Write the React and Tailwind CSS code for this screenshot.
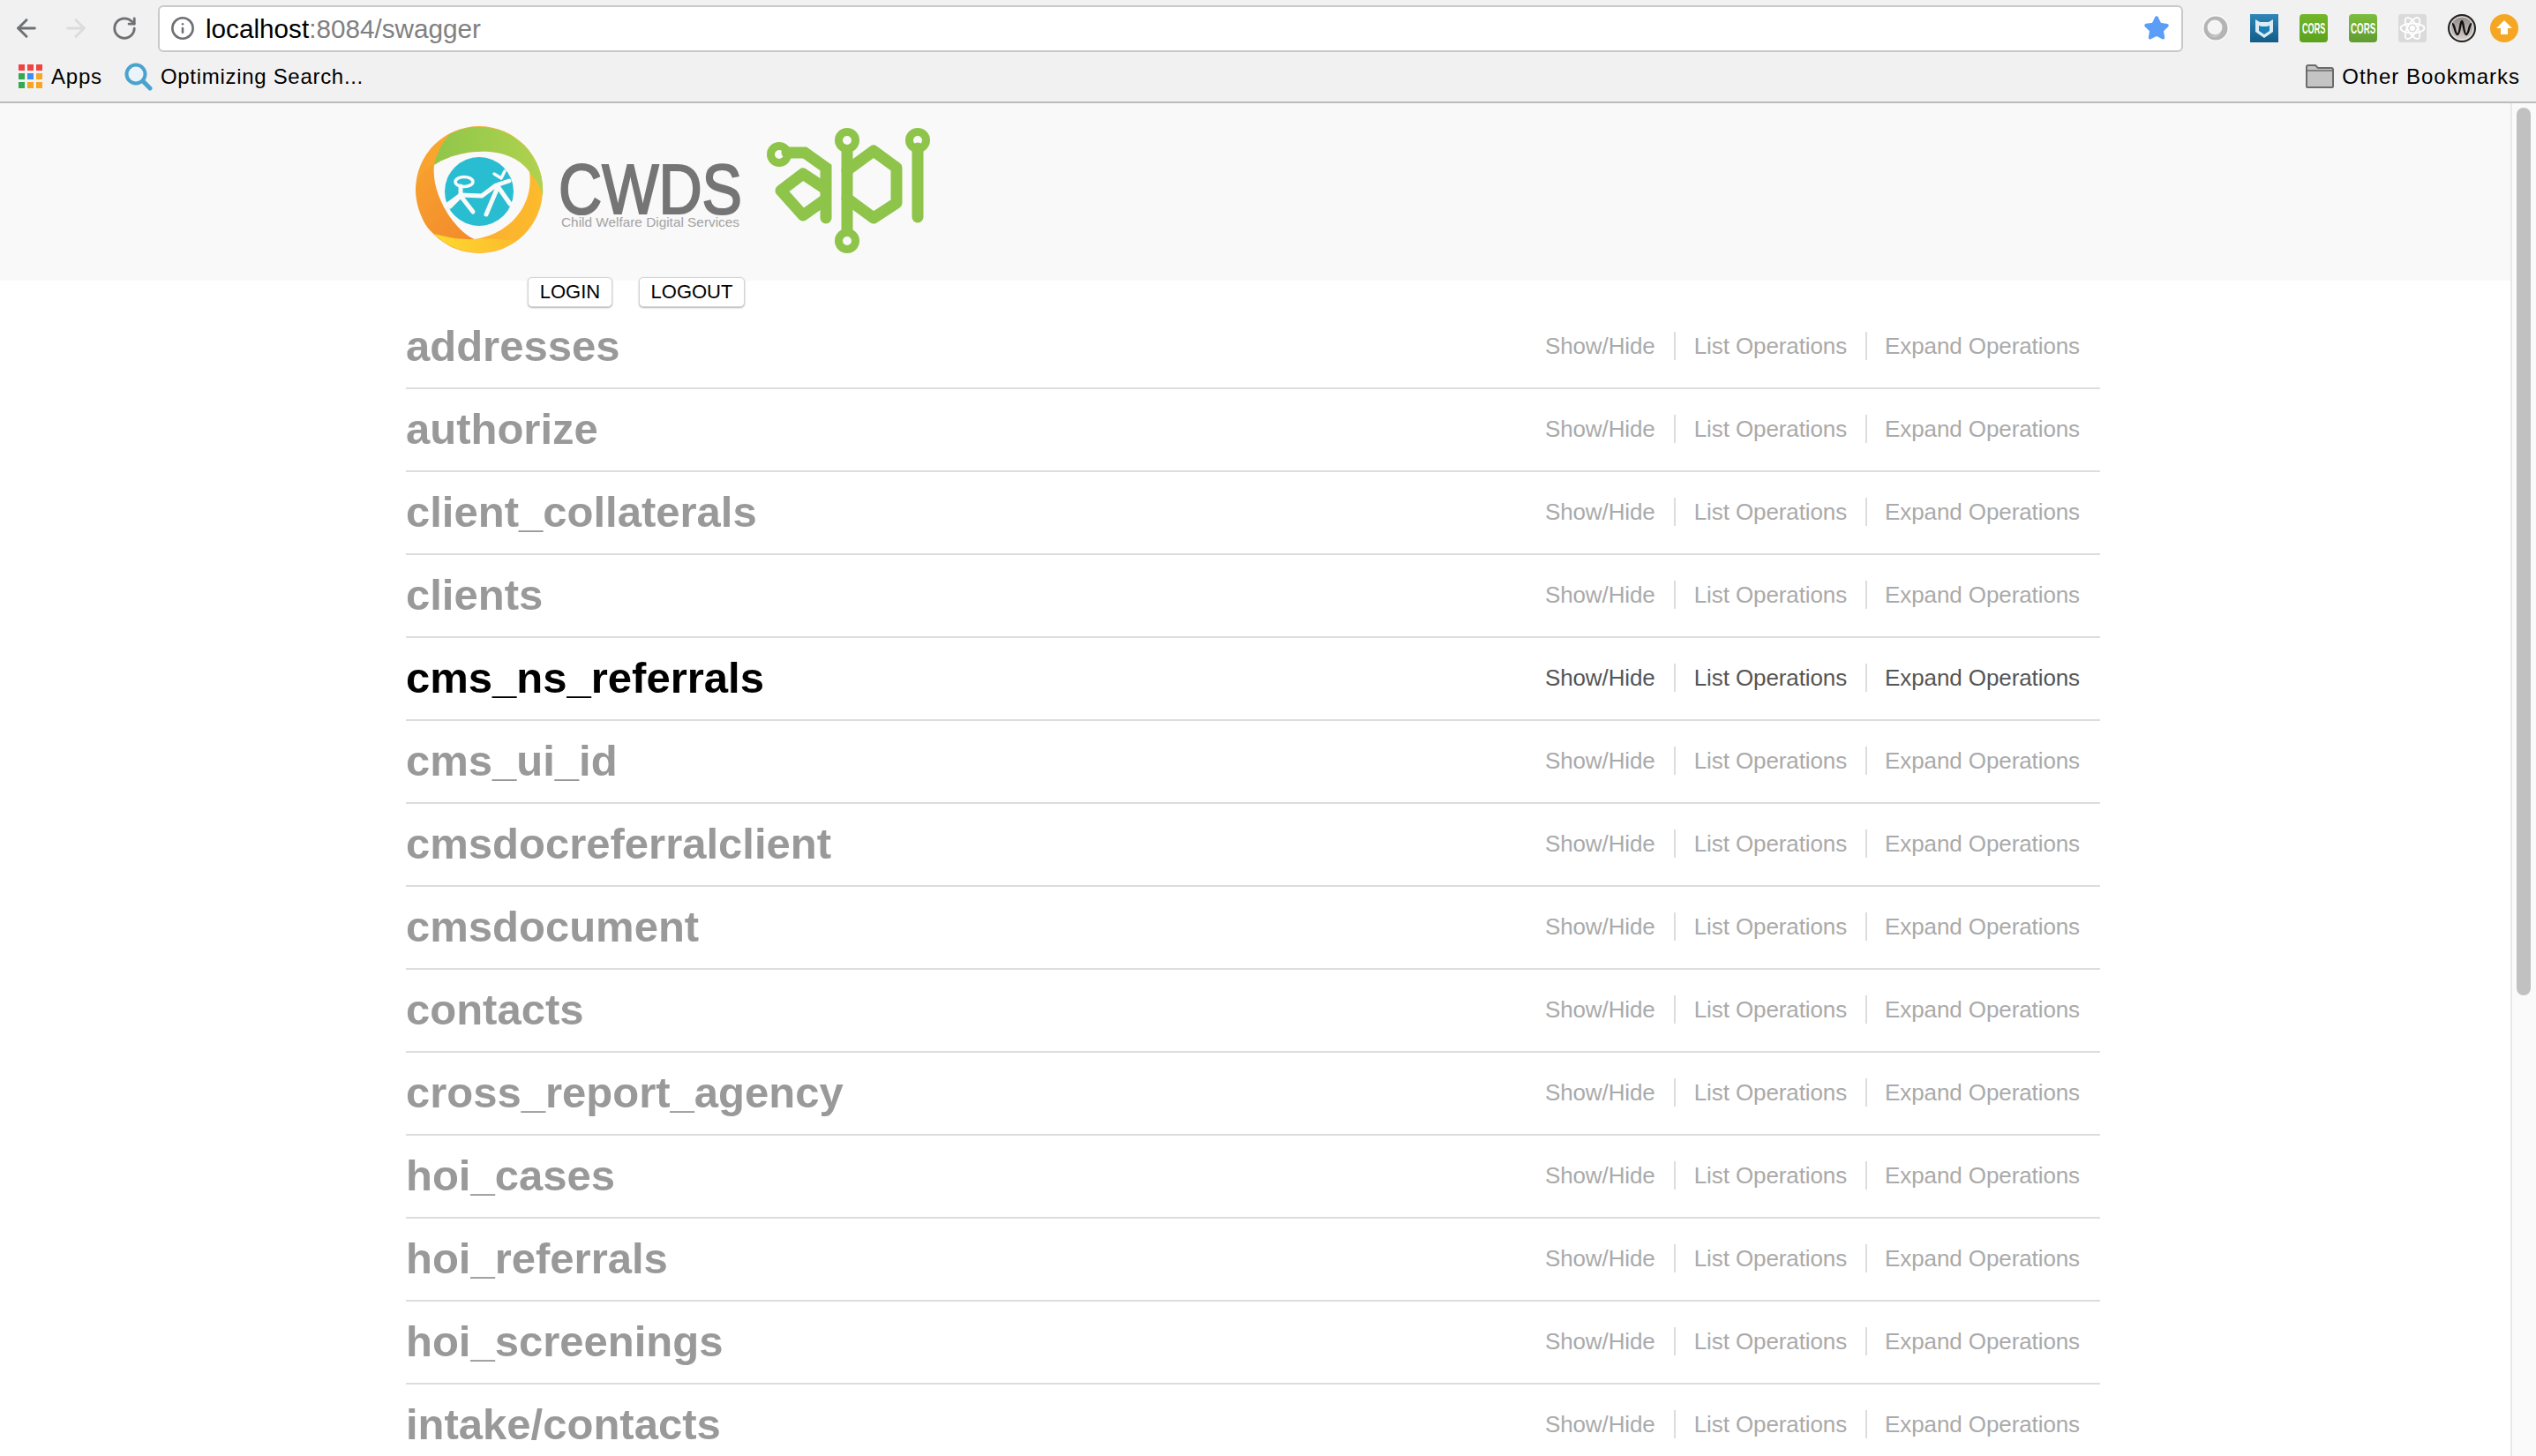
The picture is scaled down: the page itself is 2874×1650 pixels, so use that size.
import React from "react";
import { ArrowLeft, ArrowRight, RotateCw, Info, Star } from "lucide-react";

const resources = [
  "addresses",
  "authorize",
  "client_collaterals",
  "clients",
  "cms_ns_referrals",
  "cms_ui_id",
  "cmsdocreferralclient",
  "cmsdocument",
  "contacts",
  "cross_report_agency",
  "hoi_cases",
  "hoi_referrals",
  "hoi_screenings",
  "intake/contacts",
];

const appColors = [
  "bg-[#ef4444]",
  "bg-[#ef4444]",
  "bg-[#ef4444]",
  "bg-[#34a853]",
  "bg-[#3b8ef5]",
  "bg-[#f5a623]",
  "bg-[#34a853]",
  "bg-[#f5a623]",
  "bg-[#f5a623]",
];

const CorsIcon = ({ id, from, to, squeeze, x }) => (
  <svg width="32" height="32" viewBox="0 0 32 32">
    <defs>
      <linearGradient id={id} x1="0" y1="0" x2="0" y2="1">
        <stop offset="0" stopColor={from} />
        <stop offset="1" stopColor={to} />
      </linearGradient>
    </defs>
    <rect width="32" height="32" rx="4" fill={`url(#${id})`} />
    {/* tall condensed lettering */}
    <text
      transform={`translate(${x} 22) scale(${squeeze} 1)`}
      fill="#fff"
      fontSize="16"
      fontWeight="700"
      fontFamily="Liberation Sans, sans-serif"
    >
      CORS
    </text>
  </svg>
);

const ExtensionIcons = () => (
  <div className="flex items-center">
    <svg width="32" height="32" viewBox="0 0 32 32" className="mr-[23px]">
      <circle cx="16" cy="16" r="15" fill="#fafafa" />
      <circle cx="16" cy="16" r="13.5" fill="#b4b4b4" />
      <circle cx="15" cy="15" r="8.5" fill="#f4f4f4" />
      <path d="M8 23a10 10 0 0 0 14-3 8 8 0 0 1-14 3z" fill="#cfcfcf" />
    </svg>
    <svg width="32" height="32" viewBox="0 0 32 32" className="mr-6">
      <defs>
        <linearGradient id="shieldBg" x1="0" y1="0" x2="0" y2="1">
          <stop offset="0" stopColor="#2f86b8" />
          <stop offset="1" stopColor="#125c88" />
        </linearGradient>
      </defs>
      <rect width="32" height="32" fill="url(#shieldBg)" />
      <path d="M6 6l5 3h10l5-3v14l-10 7-10-7z" fill="#dcecf4" />
      <path d="M10 13l3 1h6l3-1v6l-6 4-6-4z" fill="#1a80b8" />
    </svg>
    <div className="mr-6">
      <CorsIcon id="corsA" from="#72b62a" to="#5ba21c" squeeze={0.57} x={3} />
    </div>
    <div className="mr-6">
      <CorsIcon id="corsB" from="#7cbd3e" to="#609c30" squeeze={0.61} x={2} />
    </div>
    <svg width="32" height="32" viewBox="0 0 32 32" className="mr-6">
      <rect width="32" height="32" rx="3" fill="#dadada" />
      <g fill="none" stroke="#fff" strokeWidth="1.8">
        <ellipse cx="16" cy="16" rx="13.5" ry="5.5" />
        <ellipse cx="16" cy="16" rx="13.5" ry="5.5" transform="rotate(60 16 16)" />
        <ellipse cx="16" cy="16" rx="13.5" ry="5.5" transform="rotate(120 16 16)" />
      </g>
      <circle cx="16" cy="16" r="3" fill="#fff" />
    </svg>
    <svg width="32" height="32" viewBox="0 0 32 32" className="mr-4">
      <defs>
        <linearGradient id="waveBg" x1="0" y1="0" x2="0" y2="1">
          <stop offset="0" stopColor="#8e8683" />
          <stop offset="1" stopColor="#d8d2ce" />
        </linearGradient>
      </defs>
      <circle cx="16" cy="16" r="15" fill="url(#waveBg)" stroke="#222" strokeWidth="2" />
      <circle cx="16" cy="16" r="13" fill="none" stroke="#eee" strokeWidth="1" />
      <path
        d="M5 11c3 0 3 12 6 12s3-15 5-15 2 15 5 15 3-12 6-12"
        fill="none"
        stroke="#111"
        strokeWidth="2.4"
      />
    </svg>
    <svg width="32" height="32" viewBox="0 0 32 32">
      <circle cx="16" cy="16" r="16" fill="#f5a623" />
      <path d="M16 7l9 9h-5v7h-8v-7H7z" fill="#fff" />
    </svg>
  </div>
);

const Logo = () => (
  <svg width="600" height="160" viewBox="0 0 600 160">
    <defs>
      <linearGradient id="ringBase" x1="0" y1="0" x2="1" y2="0">
        <stop offset="0" stopColor="#f8a12f" />
        <stop offset="1" stopColor="#fdbb2d" />
      </linearGradient>
      <linearGradient id="ringGreen" x1="0" y1="0" x2="1" y2="0">
        <stop offset="0" stopColor="#8fc64a" />
        <stop offset="1" stopColor="#b0d24f" />
      </linearGradient>
      <linearGradient id="ringDark" x1="0" y1="0" x2="1" y2="1">
        <stop offset="0" stopColor="#f8a12f" />
        <stop offset="1" stopColor="#f28a2c" />
      </linearGradient>
      <linearGradient id="ringYellow" x1="0" y1="0" x2="1" y2="0">
        <stop offset="0" stopColor="#fdd92e" />
        <stop offset="1" stopColor="#fdbb2d" />
      </linearGradient>
    </defs>

    <circle cx="83" cy="80" r="72" fill="url(#ringBase)" />
    <path d="M11 80C14 104 20 122 32 130 48 134 62 136 78 136 60 130 28 90 32 52 20 58 12 66 11 80z" fill="url(#ringDark)" />
    <path d="M32 130A72 72 0 0 0 125 138C110 136 95 135 78 136 62 137 45 134 32 130z" fill="url(#ringYellow)" />
    <path
      d="M50 17A72 72 0 0 1 155 87C152 75 148 70 140 60 115 25 55 36 32 52 35 38 42 25 50 17z"
      fill="url(#ringGreen)"
    />
    <path d="M32 52C55 36 115 25 140 60 145 95 120 130 78 136 60 130 28 90 32 52z" fill="#f9f9f9" />
    <circle cx="83" cy="82" r="39" fill="#29bdd2" />
    <g fill="none" stroke="#f9f9f9" strokeWidth="5" strokeLinecap="round" strokeLinejoin="round">
      <ellipse cx="66" cy="71" rx="10" ry="5.5" strokeWidth="3.5" />
      <path d="M47 97L62 86 86 87 102 75 117 70" />
      <path d="M62 76V87L76 105" />
      <path d="M62 87L50 99" />
      <path d="M105 75L91 108" />
      <path d="M104 76L118 96" />
      <path d="M100 62L108 67 112 59" strokeWidth="3.5" />
    </g>

    <text
      x="173"
      y="107"
      fill="#757575"
      stroke="#757575"
      strokeWidth="2.2"
      fontSize="80"
      fontFamily="Liberation Sans, sans-serif"
      textLength="208"
      lengthAdjust="spacingAndGlyphs"
    >
      CWDS
    </text>
    <text
      x="176"
      y="122"
      fill="#a3a3a3"
      fontSize="15"
      fontFamily="Liberation Sans, sans-serif"
      textLength="202"
      lengthAdjust="spacingAndGlyphs"
    >
      Child Welfare Digital Services
    </text>

    {/* api mark */}
    <g
      transform="translate(400 0)"
      fill="none"
      stroke="#8dc449"
      strokeWidth="13"
      strokeLinejoin="round"
      strokeLinecap="round"
    >
      <circle cx="23" cy="40" r="9.5" strokeWidth="9" />
      <path d="M32 38H52L76 55V112" strokeLinejoin="miter" />
      <path d="M74 78L50 62 25 81 50 109 74 92" />
      <circle cx="100" cy="24" r="9.5" strokeWidth="9" />
      <circle cx="100" cy="138" r="9.5" strokeWidth="9" />
      <path d="M100 32V130" strokeLinecap="butt" />
      <path d="M100 58L130 36 156 55V95L130 112 100 90" />
      <circle cx="180" cy="24" r="9.5" strokeWidth="9" />
      <path d="M180 33V111" />
    </g>
  </svg>
);

const ResourceRow = ({ name, active }) => (
  <div className="flex h-[94px] items-center justify-between border-b-2 border-[#dddddd] pb-[2px] pr-[23px]">
    <h2
      className={`text-[49px] font-bold leading-none ${
        active ? "text-black" : "text-[#999999]"
      }`}
    >
      {name}
    </h2>
    <ul
      className={`flex items-center text-[26px] tracking-[-0.1px] ${
        active ? "text-[#555555]" : "text-[#aaaaaa]"
      }`}
    >
      <li className="pr-[21px]">Show/Hide</li>
      <li className="border-l-2 border-[#dddddd] px-[21px] leading-8">List Operations</li>
      <li className="border-l-2 border-[#dddddd] pl-[20px] leading-8">Expand Operations</li>
    </ul>
  </div>
);

export default function App() {
  return (
    <div className="flex h-[1650px] w-full flex-col overflow-hidden bg-white font-['Liberation_Sans',Arial,sans-serif]">
      {/* browser chrome */}
      <div className="shrink-0 border-b-2 border-[#bcbcbc] bg-[#f1f1f1]">
        <div className="flex h-[64px] items-center pl-[14px] pr-5">
          <ArrowLeft className="h-[32px] w-[32px] text-[#6e7073]" strokeWidth={2.2} />
          <ArrowRight className="ml-6 h-[32px] w-[32px] text-[#dcdcdc]" strokeWidth={2.2} />
          <RotateCw className="ml-6 h-[30px] w-[30px] text-[#6e7073]" strokeWidth={2.2} />
          <div className="ml-[23px] flex h-[53px] w-[2295px] items-center rounded-md border-2 border-[#c9c9c9] bg-white pl-3 pr-[13px]">
            <Info className="h-[28px] w-[28px] text-[#6e7073]" strokeWidth={2.2} />
            <span className="ml-[12px] mt-[2px] text-[29.7px] text-black">
              localhost<span className="text-[#808080]">:8084/swagger</span>
            </span>
            <Star className="ml-auto h-[30px] w-[30px] fill-[#5a9ef8] text-[#5a9ef8]" />
          </div>
          <div className="ml-auto">
            <ExtensionIcons />
          </div>
        </div>
        <div className="flex h-[51px] items-center pb-[6px] pl-[21px] pr-[18px] text-[24px] text-black">
          <div className="grid grid-cols-3 gap-[3px]">
            {appColors.map((color, i) => (
              <span key={i} className={`h-[7px] w-[7px] ${color}`} />
            ))}
          </div>
          <span className="ml-[10px] tracking-[0.8px]">Apps</span>
          <svg width="32" height="32" viewBox="0 0 32 32" className="ml-[25px]">
            <circle cx="13" cy="13" r="10.5" fill="#eaf4fa" stroke="#4aa3cf" strokeWidth="4" />
            <path d="M21 21l8 8" stroke="#4aa3cf" strokeWidth="5" strokeLinecap="round" />
          </svg>
          <span className="ml-[9px] tracking-[0.7px]">Optimizing Search...</span>
          <svg width="32" height="27" viewBox="0 0 32 27" className="ml-auto">
            <path
              d="M1 25V3a2 2 0 0 1 2-2h8l3 3h15a2 2 0 0 1 2 2v19a1 1 0 0 1-1 1H2a1 1 0 0 1-1-1z"
              fill="#c4c4c4"
              stroke="#6b6b6b"
              strokeWidth="2"
            />
            <path d="M2 7h28" stroke="#6b6b6b" strokeWidth="1.5" />
          </svg>
          <span className="ml-[9px] tracking-[1px]">Other Bookmarks</span>
        </div>
      </div>

      <div className="flex min-h-0 flex-1">
        <main className="min-w-0 flex-1 overflow-hidden">
          <header className="h-[201px] bg-[#f9f9f9] pl-[460px] pt-[18px]">
            <Logo />
          </header>
          <div className="ml-[460px] w-[1920px]">
            <div className="-mt-1 flex h-[33px] gap-[30px] pl-[138px]">
              <button className="h-[34px] w-[96px] rounded-[5px] border border-[#d4d4d4] bg-white text-[22px] leading-none text-black shadow-[0_1px_2px_rgba(0,0,0,0.3)]">
                LOGIN
              </button>
              <button className="h-[34px] w-[120px] rounded-[5px] border border-[#d4d4d4] bg-white text-[22px] leading-none text-black shadow-[0_1px_2px_rgba(0,0,0,0.3)]">
                LOGOUT
              </button>
            </div>
            {resources.map((name) => (
              <ResourceRow key={name} name={name} active={name === "cms_ns_referrals"} />
            ))}
          </div>
        </main>

        {/* scrollbar */}
        <div className="w-[29px] shrink-0 border-l-2 border-[#e8e8e8] bg-[#fafafa] pl-[5px] pt-[5px]">
          <div className="h-[1006px] w-[16px] rounded-full bg-[#c1c1c1]" />
        </div>
      </div>
    </div>
  );
}
